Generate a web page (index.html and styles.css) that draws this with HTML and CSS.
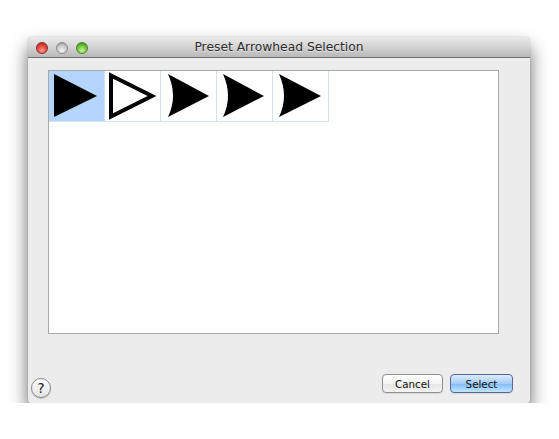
FILE: index.html
```html
<!DOCTYPE html>
<html lang="en">
<head>
    <meta charset="UTF-8">
    <title>Preset Arrowhead Selection</title>
    <link rel="stylesheet" href="styles.css">
</head>
<body>
    <div class="window">
        <div class="titlebar">
            <div class="lights">
                <span class="light red"></span>
                <span class="light grey"></span>
                <span class="light green"></span>
            </div>
            <div class="title">Preset Arrowhead Selection</div>
        </div>

        <div class="content">
            <div class="list">
                <div class="row">
                    <div class="cell selected">
                        <svg width="55" height="50" viewBox="0 0 55 50"><polygon points="5,3 48,25 5,46" fill="#000"/></svg>
                    </div>
                    <div class="cell">
                        <svg width="55" height="50" viewBox="0 0 55 50"><polygon points="6,4.5 47,25 6,45.5" fill="none" stroke="#000" stroke-width="4" stroke-linejoin="miter"/></svg>
                    </div>
                    <div class="cell">
                        <svg width="55" height="50" viewBox="0 0 55 50"><path d="M7 3 L48 25 L7 46 Q17 25 7 3 Z" fill="#000"/></svg>
                    </div>
                    <div class="cell">
                        <svg width="55" height="50" viewBox="0 0 55 50"><path d="M6 3 L47 25 L6 46 Q16 25 6 3 Z" fill="#000"/></svg>
                    </div>
                    <div class="cell">
                        <svg width="55" height="50" viewBox="0 0 55 50"><path d="M6 3 L48 25 L6 46 Q16 25 6 3 Z" fill="#000"/></svg>
                    </div>
                </div>
            </div>
        </div>

        <div class="footer">
            <div class="help">?</div>
            <div class="buttons">
                <button class="btn">Cancel</button>
                <button class="btn default">Select</button>
            </div>
        </div>
    </div>
</body>
</html>
```

FILE: styles.css
```css
body {
    margin: 0;
    background-color: #ffffff;
    font-family: "DejaVu Sans", "Liberation Sans", sans-serif;
}
.window {
    margin: 37px 0 0 28px;
    width: 502px;
    height: 366px;
    background-color: #ececec;
    border-radius: 4px 4px 3px 3px;
    box-shadow: 0 10px 18px rgba(0, 0, 0, 0.6), 0 0 1px rgba(0, 0, 0, 0.4);
    display: flex;
    flex-direction: column;
    overflow: hidden;
}
.titlebar {
    height: 20px;
    border-bottom: 1px solid #6f6f6f;
    background: linear-gradient(#ebebeb, #d3d3d3 50%, #b9b9b9);
    border-radius: 4px 4px 0 0;
    display: flex;
    align-items: center;
    position: relative;
}
.lights {
    display: flex;
    gap: 8px;
    margin-left: 8px;
    margin-top: 1px;
}
.light {
    width: 12px;
    height: 12px;
    border-radius: 50%;
    box-sizing: border-box;
}
.red {
    background: radial-gradient(circle at 50% 75%, #ff9a8f, #e0443a 55%, #9c1c17);
    border: 1px solid #8a2b24;
}
.grey {
    background: radial-gradient(circle at 50% 75%, #f4f4f4, #c8c8c8 55%, #8e8e8e);
    border: 1px solid #8a8a8a;
}
.green {
    background: radial-gradient(circle at 50% 75%, #c9f59a, #6cc33a 55%, #2f7d12);
    border: 1px solid #4a7f2b;
}
.title {
    position: absolute;
    left: 0;
    right: 0;
    top: 3px;
    text-align: center;
    font-size: 12.3px;
    color: #2e2e2e;
    text-shadow: 0 1px 0 rgba(255, 255, 255, 0.5);
}
.content {
    padding: 12px 0 0 20px;
}
.list {
    width: 449px;
    height: 262px;
    border: 1px solid #a9a9a9;
    background-color: #ffffff;
}
.row {
    display: flex;
}
.cell {
    width: 55px;
    height: 50px;
    border-right: 1px solid #d4e4ee;
    border-bottom: 1px solid #d4e4ee;
}
.cell svg {
    display: block;
}
.cell.selected {
    background-color: #b5d5fd;
}
.footer {
    flex: 1;
    display: flex;
    justify-content: space-between;
    align-items: flex-end;
    padding: 0 17px 0 3px;
}
.help {
    width: 20px;
    height: 20px;
    box-sizing: border-box;
    border: 1px solid #8a8a8a;
    border-radius: 50%;
    background: linear-gradient(#ffffff, #e4e4e4);
    box-shadow: 0 1px 1px rgba(0, 0, 0, 0.2);
    margin-bottom: 5px;
    text-align: center;
    font-size: 14px;
    line-height: 18px;
    color: #222222;
}
.buttons {
    display: flex;
    gap: 7px;
    margin-bottom: 10px;
}
.btn {
    height: 19px;
    padding: 0;
    border: 1px solid #8f8f8f;
    border-radius: 4px;
    background: linear-gradient(#ffffff, #f3f3f3 50%, #e6e6e6 51%, #f4f4f4);
    box-shadow: 0 1px 0 rgba(0, 0, 0, 0.08);
    font-family: "DejaVu Sans", sans-serif;
    font-size: 10.3px;
    color: #111111;
    width: 61px;
}
.btn.default {
    width: 63px;
    border-color: #58669b;
    background: linear-gradient(#dcecfd, #a5cdf7 50%, #7fbaf5 51%, #c3e6ff);
}
```
